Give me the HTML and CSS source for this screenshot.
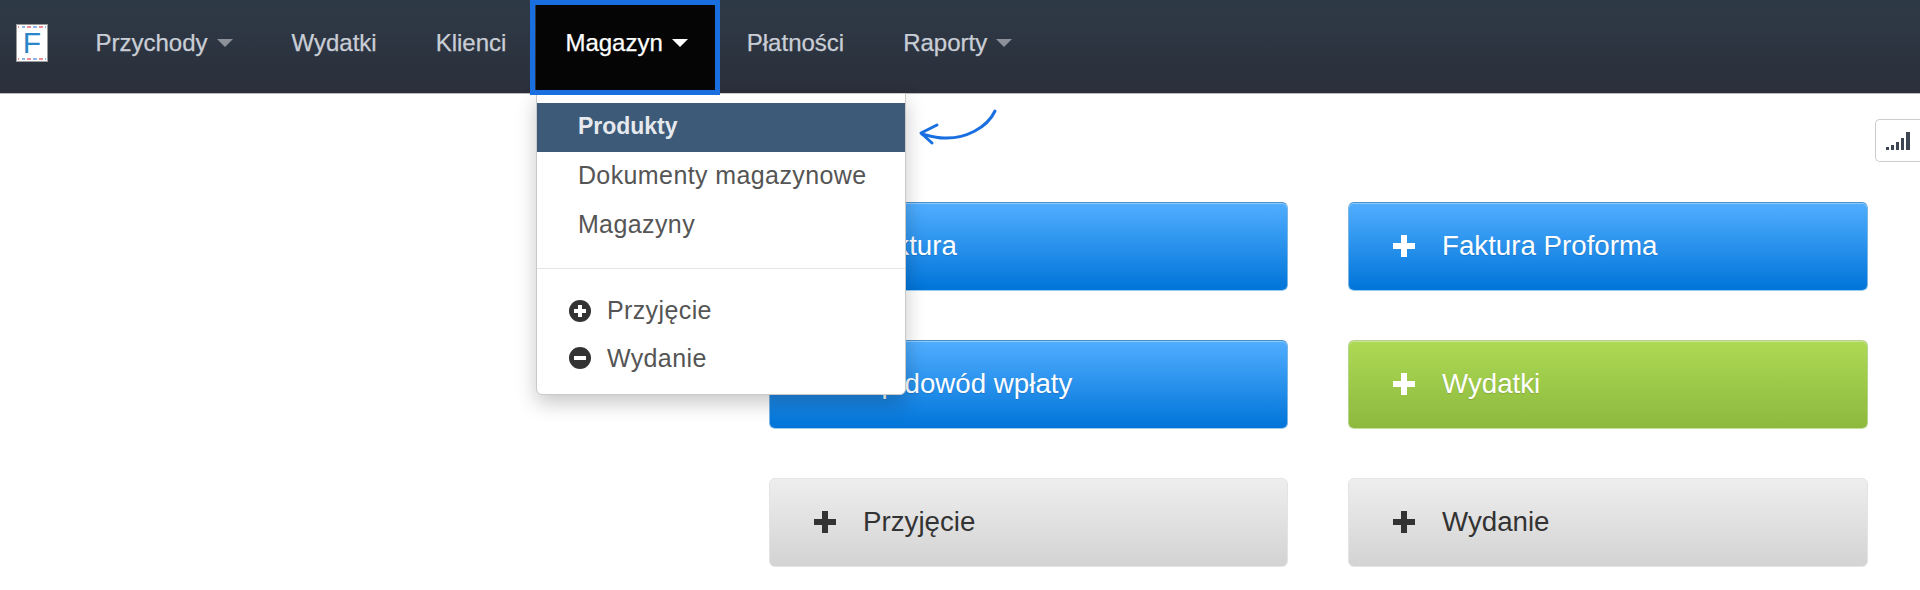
FILE: index.html
```html
<!DOCTYPE html>
<html lang="pl">
<head>
<meta charset="utf-8">
<title>Magazyn</title>
<link rel="stylesheet" href="styles.css">
</head>
<body>
<nav class="navbar">
  <a class="logo"><span class="logo-inner">F</span></a>
  <ul class="nav-list">
    <li class="nav-item">Przychody<span class="caret"></span></li>
    <li class="nav-item">Wydatki</li>
    <li class="nav-item">Klienci</li>
    <li class="nav-item nav-item-active">Magazyn<span class="caret"></span>
      <ul class="menu">
        <li class="menu-item menu-item-active">Produkty</li>
        <li class="menu-item">Dokumenty magazynowe</li>
        <li class="menu-item">Magazyny</li>
        <li class="menu-divider"></li>
        <li class="menu-item menu-item-icon">
          <svg class="menu-icon" viewBox="0 0 22 22"><circle cx="11" cy="11" r="11" fill="#333"/><path d="M9 5h4v4h4v4h-4v4H9v-4H5V9h4z" fill="#fff"/></svg>Przyjęcie
        </li>
        <li class="menu-item menu-item-icon">
          <svg class="menu-icon" viewBox="0 0 22 22"><circle cx="11" cy="11" r="11" fill="#333"/><path d="M5 9h12v4H5z" fill="#fff"/></svg>Wydanie
        </li>
      </ul>
    </li>
    <li class="nav-item">Płatności</li>
    <li class="nav-item">Raporty<span class="caret"></span></li>
  </ul>
</nav>

<svg class="arrow" viewBox="0 0 90 50" fill="none" stroke="#1a6fe0" stroke-width="3" stroke-linecap="round" stroke-linejoin="round">
  <path d="M84 5C76 22 54 33 33 32C26 32 19 30 11 28"/>
  <path d="M26 19L10 27L21 37"/>
</svg>

<main class="page">
  <div class="toolbar">
    <button class="stats-btn" aria-label="Statystyki">
      <svg viewBox="0 0 24 20" width="24" height="20"><path d="M0 16h3v3H0zM5 14h3v5H5zM10 11h3v8h-3zM15 7h3v12h-3zM20 1h4v18h-4z" fill="#3d4652"/></svg>
    </button>
  </div>
  <div class="actions">
    <a class="action action-blue"><svg class="plus" viewBox="0 0 24 24"><path d="M9 1h6v8h8v6h-8v8H9v-8H1V9h8z"/></svg>Faktura</a>
    <a class="action action-blue"><svg class="plus" viewBox="0 0 24 24"><path d="M9 1h6v8h8v6h-8v8H9v-8H1V9h8z"/></svg>Faktura Proforma</a>
    <a class="action action-blue"><svg class="plus" viewBox="0 0 24 24"><path d="M9 1h6v8h8v6h-8v8H9v-8H1V9h8z"/></svg>Kp dowód wpłaty</a>
    <a class="action action-green"><svg class="plus" viewBox="0 0 24 24"><path d="M9 1h6v8h8v6h-8v8H9v-8H1V9h8z"/></svg>Wydatki</a>
    <a class="action action-grey"><svg class="plus" viewBox="0 0 24 24"><path d="M9 1h6v8h8v6h-8v8H9v-8H1V9h8z"/></svg>Przyjęcie</a>
    <a class="action action-grey"><svg class="plus" viewBox="0 0 24 24"><path d="M9 1h6v8h8v6h-8v8H9v-8H1V9h8z"/></svg>Wydanie</a>
  </div>
</main>
</body>
</html>
```
FILE: styles.css
```css
* { box-sizing: border-box; }
html, body { margin: 0; padding: 0; }
body {
  height: 590px;
  overflow: hidden;
  background: #fff;
  font-family: "Liberation Sans", Arial, sans-serif;
  color: #333;
  position: relative;
}
ul { list-style: none; margin: 0; padding: 0; }

.navbar {
  height: 94px;
  display: flex;
  align-items: stretch;
  padding-left: 16px;
  background: linear-gradient(#2f3a47, #2a2f3b);
  border-bottom: 1px solid #b9b9b9;
  position: relative;
  z-index: 5;
}
.logo {
  align-self: center;
  width: 32px;
  height: 38px;
  margin-right: 18px;
  margin-top: -7px;
  padding: 1px;
  background: #fff;
  border: 1px solid #9a9a9a;
}
.logo-inner {
  display: block;
  height: 100%;
  border-top: 2px solid;
  border-bottom: 2px solid;
  border-image: repeating-linear-gradient(90deg, #ef8d96 0 3px, #fff 3px 5px, #8fb4ea 5px 8px, #fff 8px 10px) 2;
  color: #2a86c8;
  font-size: 30px;
  line-height: 30px;
  text-align: center;
}
.nav-list { display: flex; align-items: stretch; }
.nav-item {
  display: flex;
  align-items: center;
  gap: 9px;
  padding: 0 29.500px 8px;
  font-size: 24px;
  color: #c9ced6;
  position: relative;
  white-space: nowrap;
  -webkit-text-stroke: .25px currentColor;
}
.nav-item-active { background: #050505; color: #fff; }
.nav-item-active::after {
  content: "";
  position: absolute;
  inset: 0 -3px -2px -6px;
  border: 5px solid #1a6fe0;
  pointer-events: none;
}
.caret {
  width: 0;
  height: 0;
  border-left: 8px solid transparent;
  border-right: 8px solid transparent;
  border-top: 8px solid #8d929a;
}
.nav-item-active .caret { border-top-color: #fff; }

.menu {
  position: absolute;
  top: 93px;
  left: 0;
  width: 370px;
  padding: 9px 0 11px;
  background: #fff;
  border: 1px solid #c9c9c9;
  border-radius: 0 0 6px 6px;
  box-shadow: 0 8px 20px rgba(0, 0, 0, .22);
  z-index: -1;
  -webkit-text-stroke: 0;
}
.menu-item {
  height: 49px;
  display: flex;
  align-items: center;
  padding: 0 0 2px 41px;
  font-size: 25px;
  letter-spacing: .4px;
  color: #555;
}
.menu-item-active {
  padding-bottom: 2px;
  background: #3d5a78;
  color: #e6e9ed;
  font-weight: 700;
  font-size: 23px;
  letter-spacing: 0;
}
.menu-item-icon { height: 47.500px; padding-left: 32px; gap: 16px; }
.menu-icon { width: 22px; height: 22px; flex: none; }
.menu-divider { height: 1px; margin: 18px 0 19px; background: #e5e5e5; }

.arrow {
  position: absolute;
  left: 911px;
  top: 106px;
  width: 90px;
  height: 50px;
  z-index: 6;
}

.page { padding-top: 25px; }
.toolbar { display: flex; justify-content: flex-end; }
.stats-btn {
  width: 45px;
  height: 43px;
  padding: 0;
  display: flex;
  align-items: center;
  justify-content: center;
  background: #fff;
  border: 1px solid #ccc;
  border-right: 0;
  border-radius: 5px 0 0 5px;
}
.actions {
  display: grid;
  grid-template-columns: 519px 520px;
  grid-auto-rows: 89px;
  column-gap: 60px;
  row-gap: 49px;
  margin: 40px 0 0 769px;
}
.action {
  display: flex;
  align-items: center;
  gap: 26.500px;
  padding: 0 0 1px 42.500px;
  font-size: 27.700px;
  border-radius: 6px;
  border: 1px solid;
}
.plus { width: 24px; height: 24px; flex: none; fill: currentColor; }
.action-blue {
  color: #fff;
  background: linear-gradient(#51aeff, #0074d9);
  border-color: #4a90c9 #7bb6e4 #9fcdf0;
  box-shadow: inset 0 1px 0 rgba(255, 255, 255, .35);
  text-shadow: 0 1px 1px rgba(0, 0, 0, .15);
}
.action-green {
  color: #fff;
  background: linear-gradient(#add955, #8db93e);
  border-color: #b5cf8c #b5d48a #c8e0a0;
  box-shadow: inset 0 1px 0 rgba(255, 255, 255, .35);
  text-shadow: 0 1px 1px rgba(0, 0, 0, .15);
}
.action-grey {
  color: #333;
  background: linear-gradient(#eeeeee, #d3d3d3);
  border-color: #e4e4e4;
}
```
